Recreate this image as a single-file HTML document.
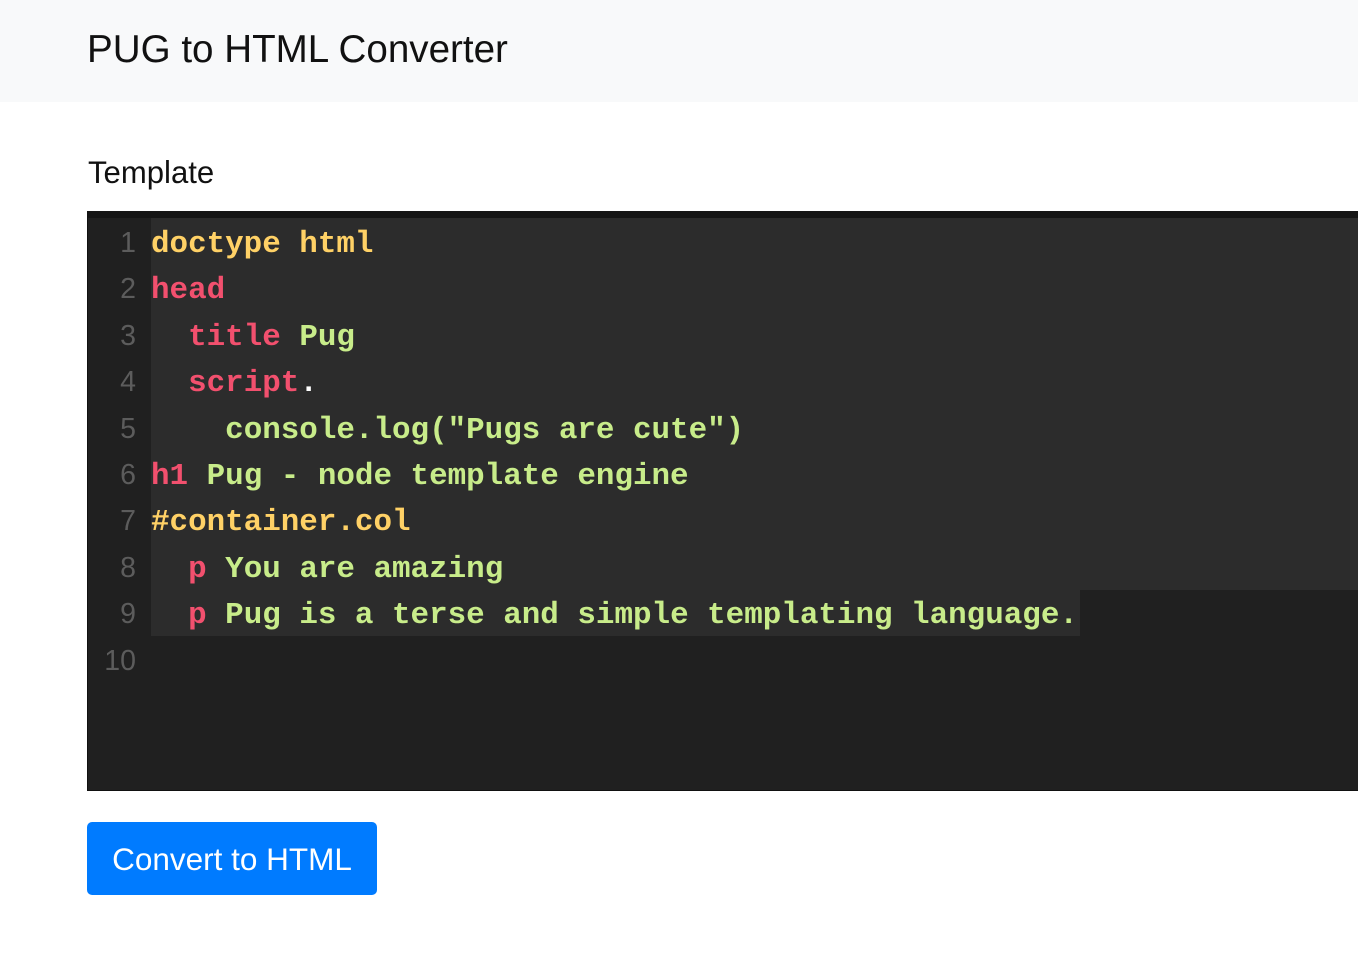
<!DOCTYPE html>
<html><head><meta charset="utf-8"><style>
body{margin:0;width:1358px;height:979px;background:#fff;font-family:"Liberation Sans",sans-serif;position:relative;overflow:hidden}
.hdr{position:absolute;left:0;top:0;width:1358px;height:102px;background:#f8f9fa}
.hdr h1{position:absolute;left:87px;top:27px;margin:0;font-size:38.6px;font-weight:400;color:#111;line-height:46px}
.lbl{position:absolute;left:88px;top:153px;font-size:31.1px;color:#111;line-height:40px}
.ed{position:absolute;left:87px;top:211px;width:1271px;height:580px;background:#202020;border-top:7px solid #151515;border-left:1px solid #111;border-bottom:1px solid #111;box-sizing:border-box}
.sel1{position:absolute;left:151px;top:218px;width:1207px;height:372px;background:#2c2c2c}
.sel2{position:absolute;left:151px;top:590px;width:929px;height:46px;background:#2c2c2c}
.code{position:absolute;left:0;top:222px;font-family:"Liberation Mono","Courier New",monospace;font-weight:bold;font-size:30.9px;line-height:46.4px;white-space:pre}
.ln{position:absolute;left:92px;width:44px;text-align:right;color:#5c5c5c;font-weight:normal;font-family:"Liberation Sans",sans-serif;font-size:28.5px;margin-top:-2px}
.tx{position:absolute;left:151px}
.y{color:#ffd166}.r{color:#f2506e}.g{color:#c8ec8a}.w{color:#fff}
.btn{position:absolute;left:87px;top:822px;width:290px;height:73px;background:#007bff;border-radius:5px;color:#fff;font-size:31.5px;line-height:75px;text-align:center}
</style></head><body>
<div class="hdr"><h1>PUG to HTML Converter</h1></div>
<div class="lbl">Template</div>
<div class="ed"></div>
<div class="sel1"></div><div class="sel2"></div>
<div class="code">
<div class="ln" style="top:0">1</div><div class="tx" style="top:0"><span class="y">doctype html</span></div>
<div class="ln" style="top:46.4px">2</div><div class="tx" style="top:46.4px"><span class="r">head</span></div>
<div class="ln" style="top:92.8px">3</div><div class="tx" style="top:92.8px">  <span class="r">title</span> <span class="g">Pug</span></div>
<div class="ln" style="top:139.2px">4</div><div class="tx" style="top:139.2px">  <span class="r">script</span><span class="w">.</span></div>
<div class="ln" style="top:185.6px">5</div><div class="tx" style="top:185.6px">    <span class="g">console.log("Pugs are cute")</span></div>
<div class="ln" style="top:232px">6</div><div class="tx" style="top:232px"><span class="r">h1</span> <span class="g">Pug - node template engine</span></div>
<div class="ln" style="top:278.4px">7</div><div class="tx" style="top:278.4px"><span class="y">#container.col</span></div>
<div class="ln" style="top:324.8px">8</div><div class="tx" style="top:324.8px">  <span class="r">p</span> <span class="g">You are amazing</span></div>
<div class="ln" style="top:371.2px">9</div><div class="tx" style="top:371.2px">  <span class="r">p</span> <span class="g">Pug is a terse and simple templating language.</span></div>
<div class="ln" style="top:417.6px">10</div>
</div>
<div class="btn">Convert to HTML</div>
</body></html>
